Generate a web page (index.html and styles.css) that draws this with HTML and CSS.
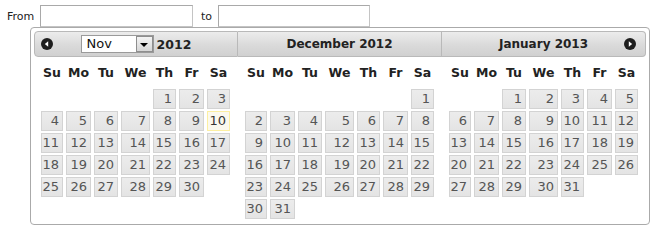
FILE: index.html
```html
<!DOCTYPE html>
<html>
<head>
<meta charset="utf-8">
<link rel="stylesheet" href="styles.css">
</head>
<body>
<div class="page">
  <div class="range">
    <label class="lbl lbl-from" for="from">From</label>
    <input class="field field-from" id="from" type="text">
    <label class="lbl lbl-to" for="to">to</label>
    <input class="field field-to" id="to" type="text">
  </div>

  <div class="dp">
    <div class="group group-first">
      <div class="hdr">
        <span class="nav nav-prev"><svg width="12" height="12" viewBox="0 0 12 12"><circle cx="6" cy="6" r="6" fill="#1e1e1e"/><path d="M7.2 3.2 L3.8 6 L7.2 8.8 Z" fill="#fff"/></svg></span>
        <div class="title"><span class="sel"><span class="sel-text">Nov</span><span class="sel-btn"><i class="caret"></i></span></span><span class="year">2012</span></div>
      </div>
      <div class="cal">
        <div class="dow">Su</div><div class="dow">Mo</div><div class="dow">Tu</div><div class="dow">We</div><div class="dow">Th</div><div class="dow">Fr</div><div class="dow">Sa</div>
        <div class="blank"></div><div class="blank"></div><div class="blank"></div><div class="blank"></div><div class="day">1</div><div class="day">2</div><div class="day">3</div>
        <div class="day">4</div><div class="day">5</div><div class="day">6</div><div class="day">7</div><div class="day">8</div><div class="day">9</div><div class="day today">10</div>
        <div class="day">11</div><div class="day">12</div><div class="day">13</div><div class="day">14</div><div class="day">15</div><div class="day">16</div><div class="day">17</div>
        <div class="day">18</div><div class="day">19</div><div class="day">20</div><div class="day">21</div><div class="day">22</div><div class="day">23</div><div class="day">24</div>
        <div class="day">25</div><div class="day">26</div><div class="day">27</div><div class="day">28</div><div class="day">29</div><div class="day">30</div>
      </div>
    </div>

    <div class="group group-middle">
      <div class="hdr">
        <div class="title">December 2012</div>
      </div>
      <div class="cal">
        <div class="dow">Su</div><div class="dow">Mo</div><div class="dow">Tu</div><div class="dow">We</div><div class="dow">Th</div><div class="dow">Fr</div><div class="dow">Sa</div>
        <div class="blank"></div><div class="blank"></div><div class="blank"></div><div class="blank"></div><div class="blank"></div><div class="blank"></div><div class="day">1</div>
        <div class="day">2</div><div class="day">3</div><div class="day">4</div><div class="day">5</div><div class="day">6</div><div class="day">7</div><div class="day">8</div>
        <div class="day">9</div><div class="day">10</div><div class="day">11</div><div class="day">12</div><div class="day">13</div><div class="day">14</div><div class="day">15</div>
        <div class="day">16</div><div class="day">17</div><div class="day">18</div><div class="day">19</div><div class="day">20</div><div class="day">21</div><div class="day">22</div>
        <div class="day">23</div><div class="day">24</div><div class="day">25</div><div class="day">26</div><div class="day">27</div><div class="day">28</div><div class="day">29</div>
        <div class="day">30</div><div class="day">31</div>
      </div>
    </div>

    <div class="group group-last">
      <div class="hdr">
        <div class="title">January 2013</div>
        <span class="nav nav-next"><svg width="12" height="12" viewBox="0 0 12 12"><circle cx="6" cy="6" r="6" fill="#1e1e1e"/><path d="M4.8 3.2 L8.2 6 L4.8 8.8 Z" fill="#fff"/></svg></span>
      </div>
      <div class="cal">
        <div class="dow">Su</div><div class="dow">Mo</div><div class="dow">Tu</div><div class="dow">We</div><div class="dow">Th</div><div class="dow">Fr</div><div class="dow">Sa</div>
        <div class="blank"></div><div class="blank"></div><div class="day">1</div><div class="day">2</div><div class="day">3</div><div class="day">4</div><div class="day">5</div>
        <div class="day">6</div><div class="day">7</div><div class="day">8</div><div class="day">9</div><div class="day">10</div><div class="day">11</div><div class="day">12</div>
        <div class="day">13</div><div class="day">14</div><div class="day">15</div><div class="day">16</div><div class="day">17</div><div class="day">18</div><div class="day">19</div>
        <div class="day">20</div><div class="day">21</div><div class="day">22</div><div class="day">23</div><div class="day">24</div><div class="day">25</div><div class="day">26</div>
        <div class="day">27</div><div class="day">28</div><div class="day">29</div><div class="day">30</div><div class="day">31</div>
      </div>
    </div>
  </div>
</div>
</body>
</html>
```

FILE: styles.css
```css
html, body {
  margin: 0;
  padding: 0;
  background: #ffffff;
}

.page {
  font-family: "DejaVu Sans", Verdana, sans-serif;
  color: #222222;
  padding: 5px 0 0 0;
}

.range {
  display: flex;
  align-items: center;
  height: 22px;
}

.lbl {
  font-size: 11px;
  color: #222;
  box-sizing: border-box;
}

.lbl-from {
  width: 40px;
  padding-left: 7px;
}

.lbl-to {
  width: 25px;
  padding-left: 8px;
}

.field {
  box-sizing: border-box;
  height: 22px;
  border: 1px solid #a9a9a9;
  border-bottom-color: #c4c4c4;
  border-right-color: #c4c4c4;
  margin: 0;
  padding: 0 3px;
  background: #fff;
}

.field-from {
  width: 153px;
}

.field-to {
  width: 152px;
}

.dp {
  box-sizing: border-box;
  margin-left: 30px;
  width: 620px;
  border: 1px solid #aaaaaa;
  border-radius: 4px;
  background: #ffffff;
  padding: 3px 3px 5px 3px;
  display: flex;
}

.group {
  width: 204px;
  flex: none;
}

.hdr {
  position: relative;
  box-sizing: border-box;
  height: 26px;
  border: 1px solid #b9b9b9;
  background: linear-gradient(#ececec, #dadada 55%, #d0d0d0);
}

.group-first .hdr {
  border-radius: 4px 0 0 4px;
}

.group-middle .hdr {
  border-left-width: 0;
}

.group-last .hdr {
  border-left-width: 0;
  border-radius: 0 4px 4px 0;
}

.title {
  display: flex;
  justify-content: center;
  align-items: center;
  height: 24px;
  font-size: 12px;
  font-weight: bold;
  color: #222;
}

.nav {
  position: absolute;
  top: 6px;
  width: 12px;
  height: 12px;
  line-height: 0;
}

.nav-prev {
  left: 6px;
}

.nav-next {
  right: 9px;
}

.sel {
  display: inline-flex;
  box-sizing: border-box;
  width: 73px;
  height: 18px;
  border: 1px solid #9a9a9a;
  background: #fff;
  margin-right: 3px;
}

.sel-text {
  flex: 1;
  font-size: 13px;
  font-weight: normal;
  color: #111;
  line-height: 16px;
  padding-left: 5px;
}

.sel-btn {
  box-sizing: border-box;
  width: 17px;
  height: 16px;
  border: 1px solid #8e8e8e;
  background: linear-gradient(#f4f4f4, #d6d6d6);
  display: flex;
  align-items: center;
  justify-content: center;
}

.caret {
  display: block;
  width: 0;
  height: 0;
  border-left: 4px solid transparent;
  border-right: 4px solid transparent;
  border-top: 4px solid #000;
  margin-top: 1px;
}

.year {
  font-size: 12.5px;
}

.cal {
  display: grid;
  grid-template-columns: 22px 25px 24px 29px 23px 25px 23px;
  grid-template-rows: 30px repeat(6, 20px);
  column-gap: 3px;
  row-gap: 2px;
  padding-left: 7px;
}

.dow {
  font-size: 12.5px;
  font-weight: bold;
  color: #222;
  text-align: center;
  align-self: center;
  white-space: nowrap;
}

.day {
  box-sizing: border-box;
  border: 1px solid #d3d3d3;
  background: linear-gradient(#ececec, #e4e4e4);
  color: #555555;
  font-size: 13px;
  line-height: 18px;
  text-align: right;
  padding-right: 3px;
}

.day.today {
  border-color: #fcefa1;
  background: #fbf9ee;
  color: #363636;
}
```
